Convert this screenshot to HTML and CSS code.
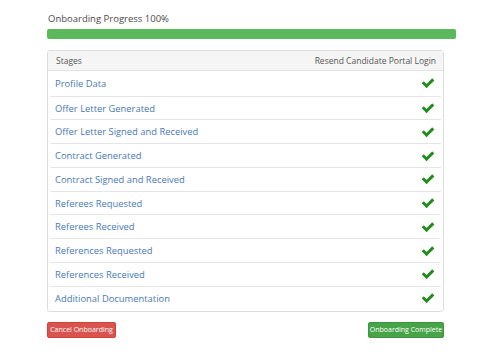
FILE: index.html
```html
<!DOCTYPE html>
<html>
<head>
<meta charset="utf-8">
<link rel="stylesheet" href="styles.css">
</head>
<body>
<div class="wrap">
  <div class="title">Onboarding Progress 100%</div>
  <div class="progress"><div class="bar" style="width:100%"></div></div>
  <div class="side">
    <div class="panel">
      <div class="panel-head">
        <span>Stages</span>
        <span>Resend Candidate Portal Login</span>
      </div>
      <ul class="list">
        <li><a>Profile Data</a><svg class="check" viewBox="0 0 1792 1792"><path d="M1671 566q0 40-28 68l-724 724-136 136q-28 28-68 28t-68-28l-136-136-362-362q-28-28-28-68t28-68l136-136q28-28 68-28t68 28l294 295 656-657q28-28 68-28t68 28l136 136q28 28 28 68z"/></svg></li>
        <li><a>Offer Letter Generated</a><svg class="check" viewBox="0 0 1792 1792"><path d="M1671 566q0 40-28 68l-724 724-136 136q-28 28-68 28t-68-28l-136-136-362-362q-28-28-28-68t28-68l136-136q28-28 68-28t68 28l294 295 656-657q28-28 68-28t68 28l136 136q28 28 28 68z"/></svg></li>
        <li><a>Offer Letter Signed and Received</a><svg class="check" viewBox="0 0 1792 1792"><path d="M1671 566q0 40-28 68l-724 724-136 136q-28 28-68 28t-68-28l-136-136-362-362q-28-28-28-68t28-68l136-136q28-28 68-28t68 28l294 295 656-657q28-28 68-28t68 28l136 136q28 28 28 68z"/></svg></li>
        <li><a>Contract Generated</a><svg class="check" viewBox="0 0 1792 1792"><path d="M1671 566q0 40-28 68l-724 724-136 136q-28 28-68 28t-68-28l-136-136-362-362q-28-28-28-68t28-68l136-136q28-28 68-28t68 28l294 295 656-657q28-28 68-28t68 28l136 136q28 28 28 68z"/></svg></li>
        <li><a>Contract Signed and Received</a><svg class="check" viewBox="0 0 1792 1792"><path d="M1671 566q0 40-28 68l-724 724-136 136q-28 28-68 28t-68-28l-136-136-362-362q-28-28-28-68t28-68l136-136q28-28 68-28t68 28l294 295 656-657q28-28 68-28t68 28l136 136q28 28 28 68z"/></svg></li>
        <li><a>Referees Requested</a><svg class="check" viewBox="0 0 1792 1792"><path d="M1671 566q0 40-28 68l-724 724-136 136q-28 28-68 28t-68-28l-136-136-362-362q-28-28-28-68t28-68l136-136q28-28 68-28t68 28l294 295 656-657q28-28 68-28t68 28l136 136q28 28 28 68z"/></svg></li>
        <li><a>Referees Received</a><svg class="check" viewBox="0 0 1792 1792"><path d="M1671 566q0 40-28 68l-724 724-136 136q-28 28-68 28t-68-28l-136-136-362-362q-28-28-28-68t28-68l136-136q28-28 68-28t68 28l294 295 656-657q28-28 68-28t68 28l136 136q28 28 28 68z"/></svg></li>
        <li><a>References Requested</a><svg class="check" viewBox="0 0 1792 1792"><path d="M1671 566q0 40-28 68l-724 724-136 136q-28 28-68 28t-68-28l-136-136-362-362q-28-28-28-68t28-68l136-136q28-28 68-28t68 28l294 295 656-657q28-28 68-28t68 28l136 136q28 28 28 68z"/></svg></li>
        <li><a>References Received</a><svg class="check" viewBox="0 0 1792 1792"><path d="M1671 566q0 40-28 68l-724 724-136 136q-28 28-68 28t-68-28l-136-136-362-362q-28-28-28-68t28-68l136-136q28-28 68-28t68 28l294 295 656-657q28-28 68-28t68 28l136 136q28 28 28 68z"/></svg></li>
        <li><a>Additional Documentation</a><svg class="check" viewBox="0 0 1792 1792"><path d="M1671 566q0 40-28 68l-724 724-136 136q-28 28-68 28t-68-28l-136-136-362-362q-28-28-28-68t28-68l136-136q28-28 68-28t68 28l294 295 656-657q28-28 68-28t68 28l136 136q28 28 28 68z"/></svg></li>
      </ul>
    </div>
  </div>
  <div class="actions">
    <button class="btn btn-danger">Cancel Onboarding</button>
    <button class="btn btn-success">Onboarding Complete</button>
  </div>
</div>
</body>
</html>
```
FILE: styles.css
```css
* { box-sizing: border-box; }
html, body { margin: 0; padding: 0; background: #fff; }
body { font-family: "Open Sans", "Liberation Sans", sans-serif; color: #444; }
.wrap { padding: 12px 0 0 47px; width: 457px; }
.title { font-size: 9.5px; line-height: 14px; padding-left: 1px; color: #4a4a4a; }
.progress { margin-top: 3px; height: 10px; width: 409px; background: #f5f5f5; border-radius: 2px; overflow: hidden; }
.bar { height: 100%; background: #5cb85c; }
.side { margin-top: 11px; width: 397px; }
.panel { border: 1px solid #ddd; border-radius: 3px; }
.panel-head { display: flex; justify-content: space-between; align-items: center; height: 20px; padding: 0 7px 0 8px; background: #f5f5f5; border-bottom: 1px solid #e4e4e4; font-size: 8.5px; color: #555; }
.list { list-style: none; margin: 0; padding: 0 2px 2px; }
.list li { display: flex; justify-content: space-between; align-items: center; height: 23.75px; padding: 0 6px 0 5px; border-top: 1px solid #e6e6e6; font-size: 9.4px; }
.list li:first-child { border-top: none; height: 24.7px; }
.list a { color: #4a7ab5; }
.check { width: 14px; height: 14px; fill: #238a1f; }
.actions { display: flex; justify-content: space-between; width: 397px; margin-top: 10px; }
.btn { height: 16px; padding: 0; border-radius: 2px; font-family: "Open Sans", "Liberation Sans", sans-serif; font-size: 7px; line-height: 14px; white-space: nowrap; text-align: center; color: #fff; border: 1px solid; cursor: pointer; }
.btn-danger { background: #d9534f; border-color: #d43f3a; width: 69px; }
.btn-success { background: #47a447; border-color: #3f933f; width: 76px; }
```
